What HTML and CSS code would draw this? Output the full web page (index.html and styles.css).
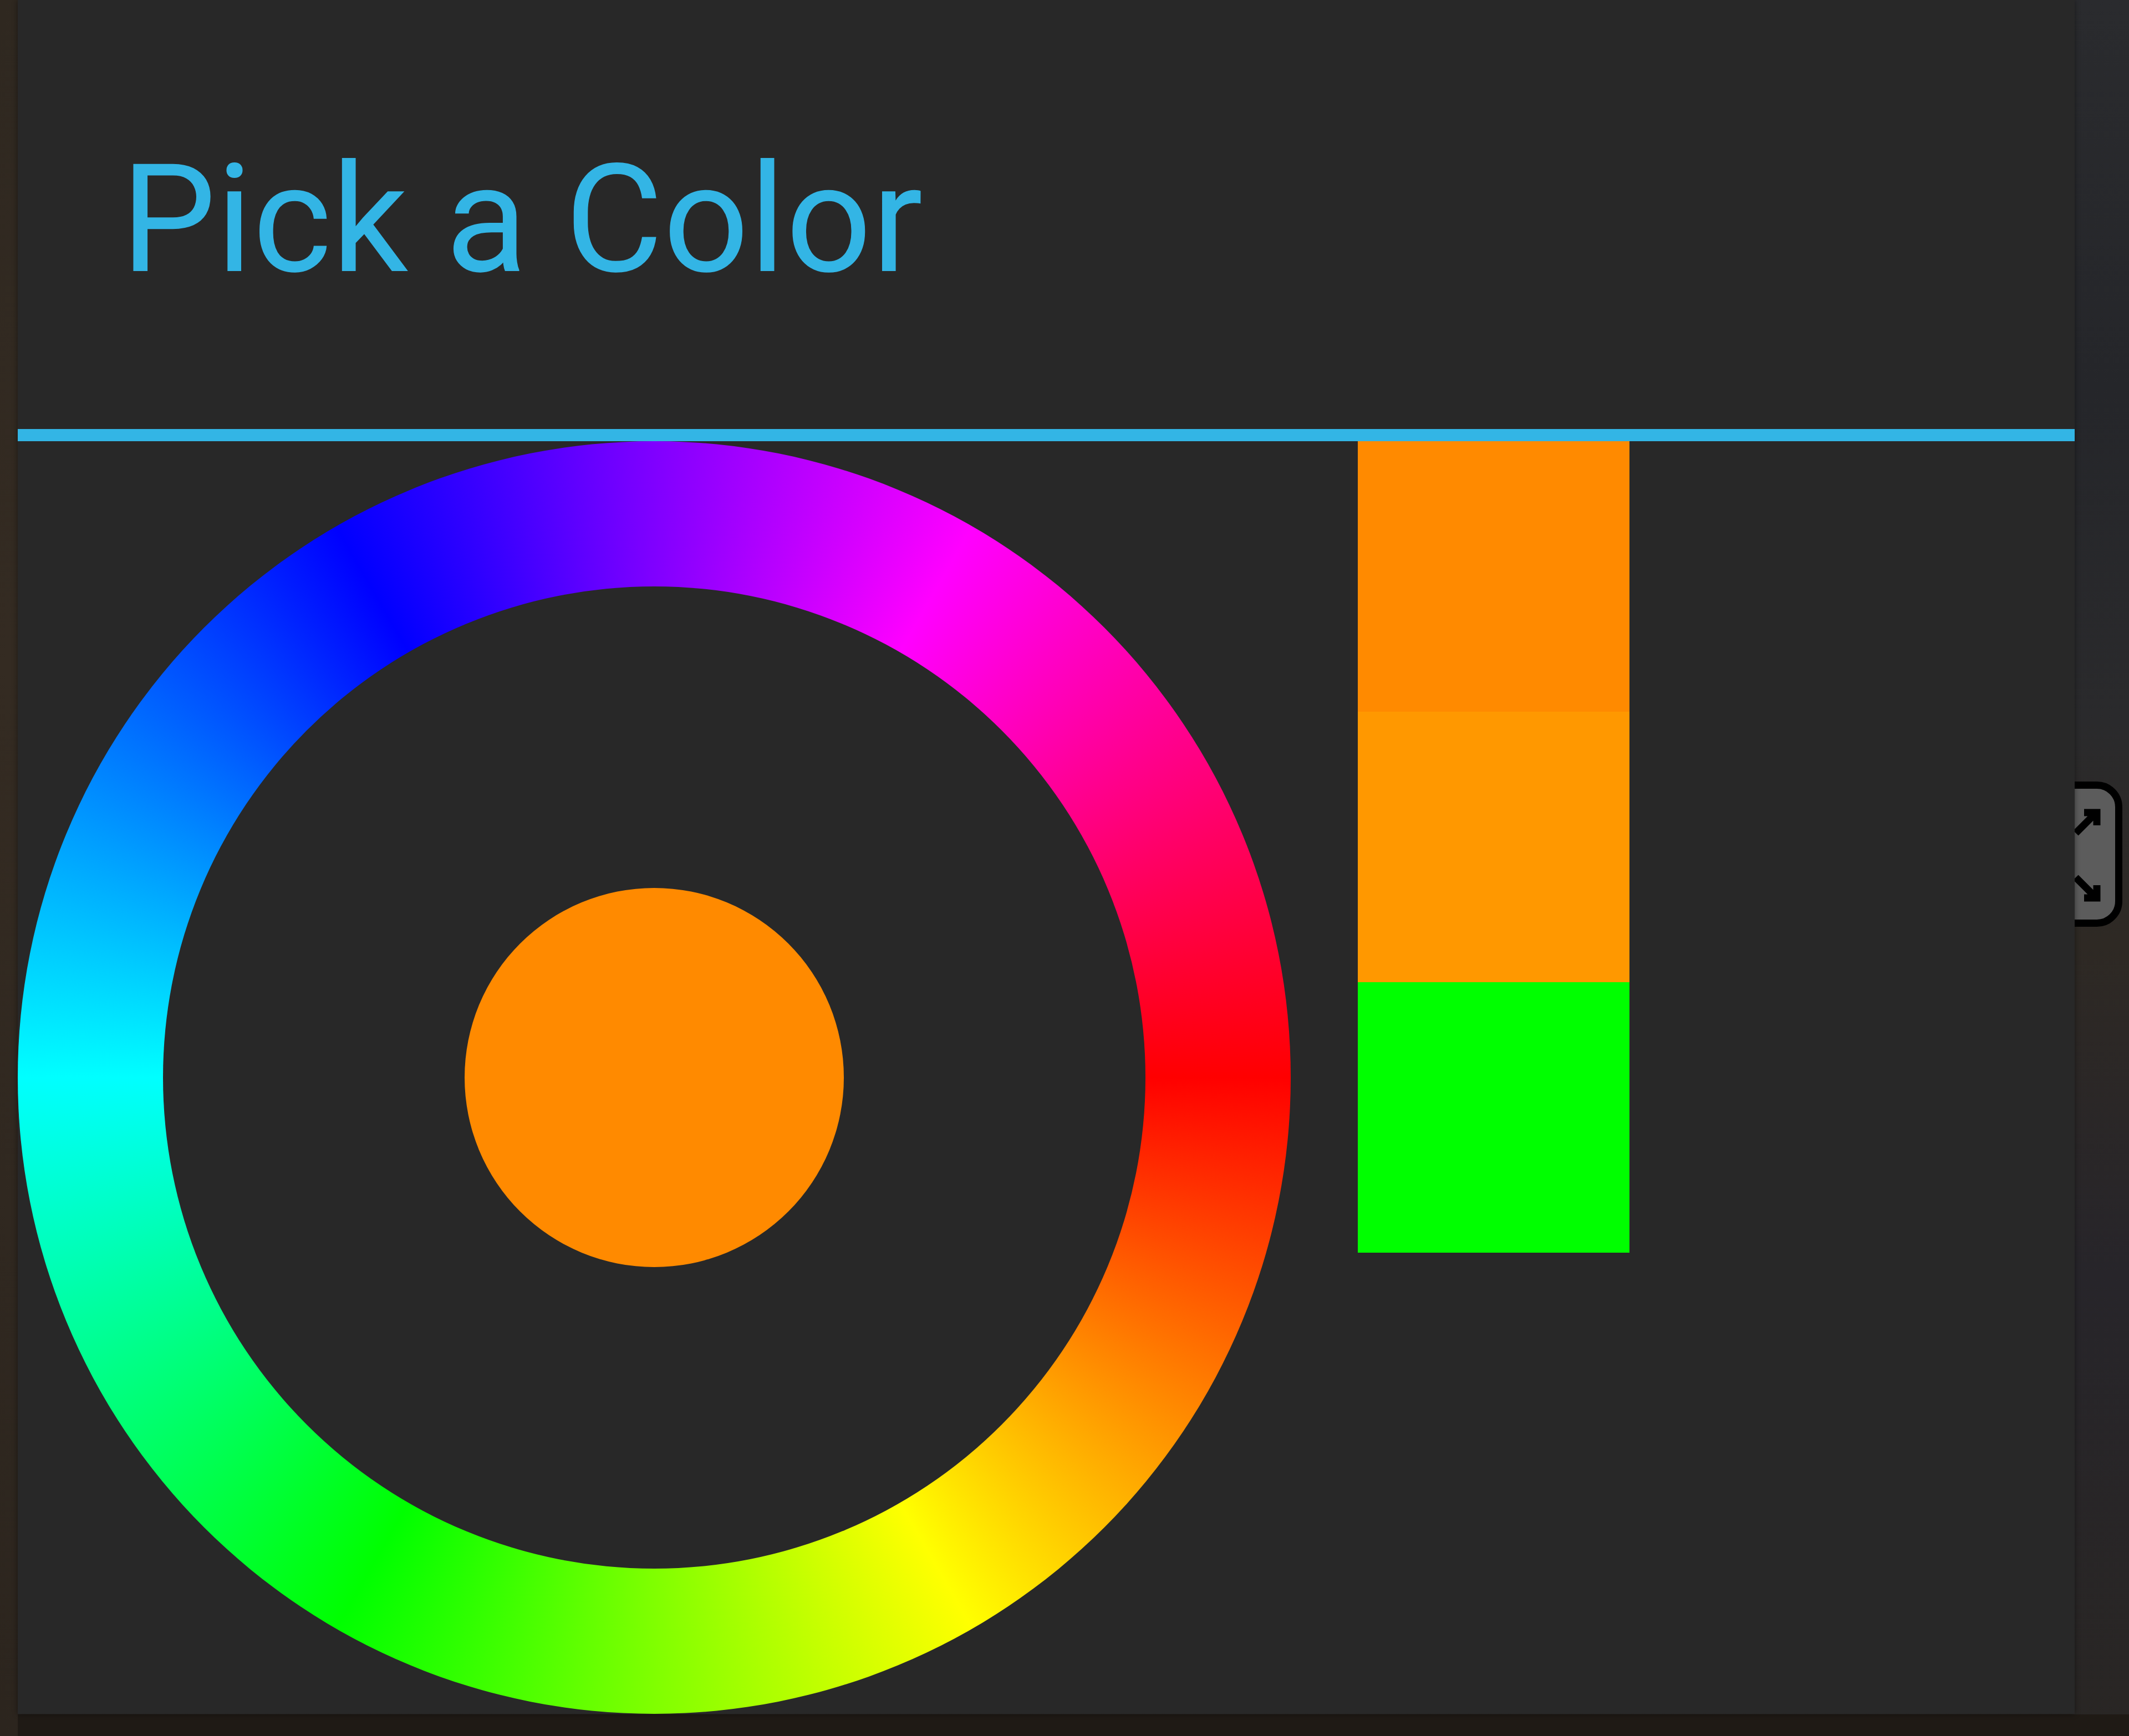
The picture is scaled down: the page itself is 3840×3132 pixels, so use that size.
FILE: index.html
```html
<!DOCTYPE html>
<html lang="en">
<head>
<meta charset="utf-8">
<title>Pick a Color</title>
<link rel="stylesheet" href="styles.css">
</head>
<body>
<div class="screen">
  <div class="bg-icon">
    <svg class="bg-icon-arrows" viewBox="0 0 112 236" width="112" height="236">
      <path d="M41 80 L78 43 M56 43 L79 43 L79 66" fill="none" stroke="#000" stroke-width="13"/>
      <path d="M41 160 L78 197 M56 197 L79 197 L79 174" fill="none" stroke="#000" stroke-width="13"/>
    </svg>
  </div>
  <div class="dialog">
    <div class="header">
      <h1 class="title">Pick a Color</h1>
    </div>
    <div class="divider"></div>
    <div class="content">
      <div class="wheel">
        <div class="wheel-hole">
          <div class="dot"></div>
        </div>
      </div>
      <div class="swatches">
        <div class="swatch swatch-old"></div>
        <div class="swatch swatch-new"></div>
        <div class="swatch swatch-green"></div>
      </div>
    </div>
  </div>
</div>
</body>
</html>
```
FILE: styles.css
```css
html, body {
  margin: 0;
  padding: 0;
}
body {
  width: 3840px;
  height: 3132px;
  overflow: hidden;
  background: #211c17;
  font-family: Roboto, "Noto Sans", sans-serif;
}
.screen {
  position: relative;
  width: 3840px;
  height: 3132px;
  background:
    linear-gradient(to bottom, transparent 0 3093px, #1f1a15 3093px),
    linear-gradient(to bottom, #2a2b2e 0, #25262a 700px, #2a2a2c 1300px, #2e2924 1700px, #27252a 2300px, #292624 3132px);
}
.screen::before {
  content: "";
  position: absolute;
  left: 0;
  top: 0;
  width: 32px;
  height: 3132px;
  background: linear-gradient(to bottom, #2f2820, #342b22 1200px, #2c251e 3132px);
}
.bg-icon {
  position: absolute;
  left: 3690px;
  top: 1410px;
  width: 112px;
  height: 236px;
  border: 13px solid #000;
  border-radius: 46px;
  background: #5c5c5c;
  z-index: 0;
}
.bg-icon-arrows {
  position: absolute;
  left: 0;
  top: 0;
}
.dialog {
  position: relative;
  z-index: 1;
  margin-left: 32px;
  width: 3710px;
  background: #282828;
  box-shadow: 0 0 10px rgba(0, 0, 0, 0.45);
}
.header {
  padding: 260px 0 242px 186px;
}
.title {
  margin: 0;
  font-family: Roboto, sans-serif;
  font-weight: 400;
  font-size: 272px;
  line-height: 272px;
  color: #33b5e5;
}
.divider {
  height: 22px;
  background: #33b5e5;
}
.content {
  display: flex;
  align-items: flex-start;
}
.wheel {
  width: 2296px;
  height: 2296px;
  border-radius: 50%;
  background: conic-gradient(from 90deg, #ff0000, #ffff00, #00ff00, #00ffff, #0000ff, #ff00ff, #ff0000);
  display: flex;
  align-items: center;
  justify-content: center;
}
.wheel-hole {
  width: 1772px;
  height: 1772px;
  border-radius: 50%;
  background: #282828;
  display: flex;
  align-items: center;
  justify-content: center;
}
.dot {
  width: 684px;
  height: 684px;
  border-radius: 50%;
  background: #ff8a00;
}
.swatches {
  margin-left: 121px;
  display: flex;
  flex-direction: column;
}
.swatch {
  width: 490px;
  height: 488px;
}
.swatch-old {
  background: #ff8a00;
}
.swatch-new {
  background: #ff9800;
}
.swatch-green {
  background: #00ff00;
}
```
